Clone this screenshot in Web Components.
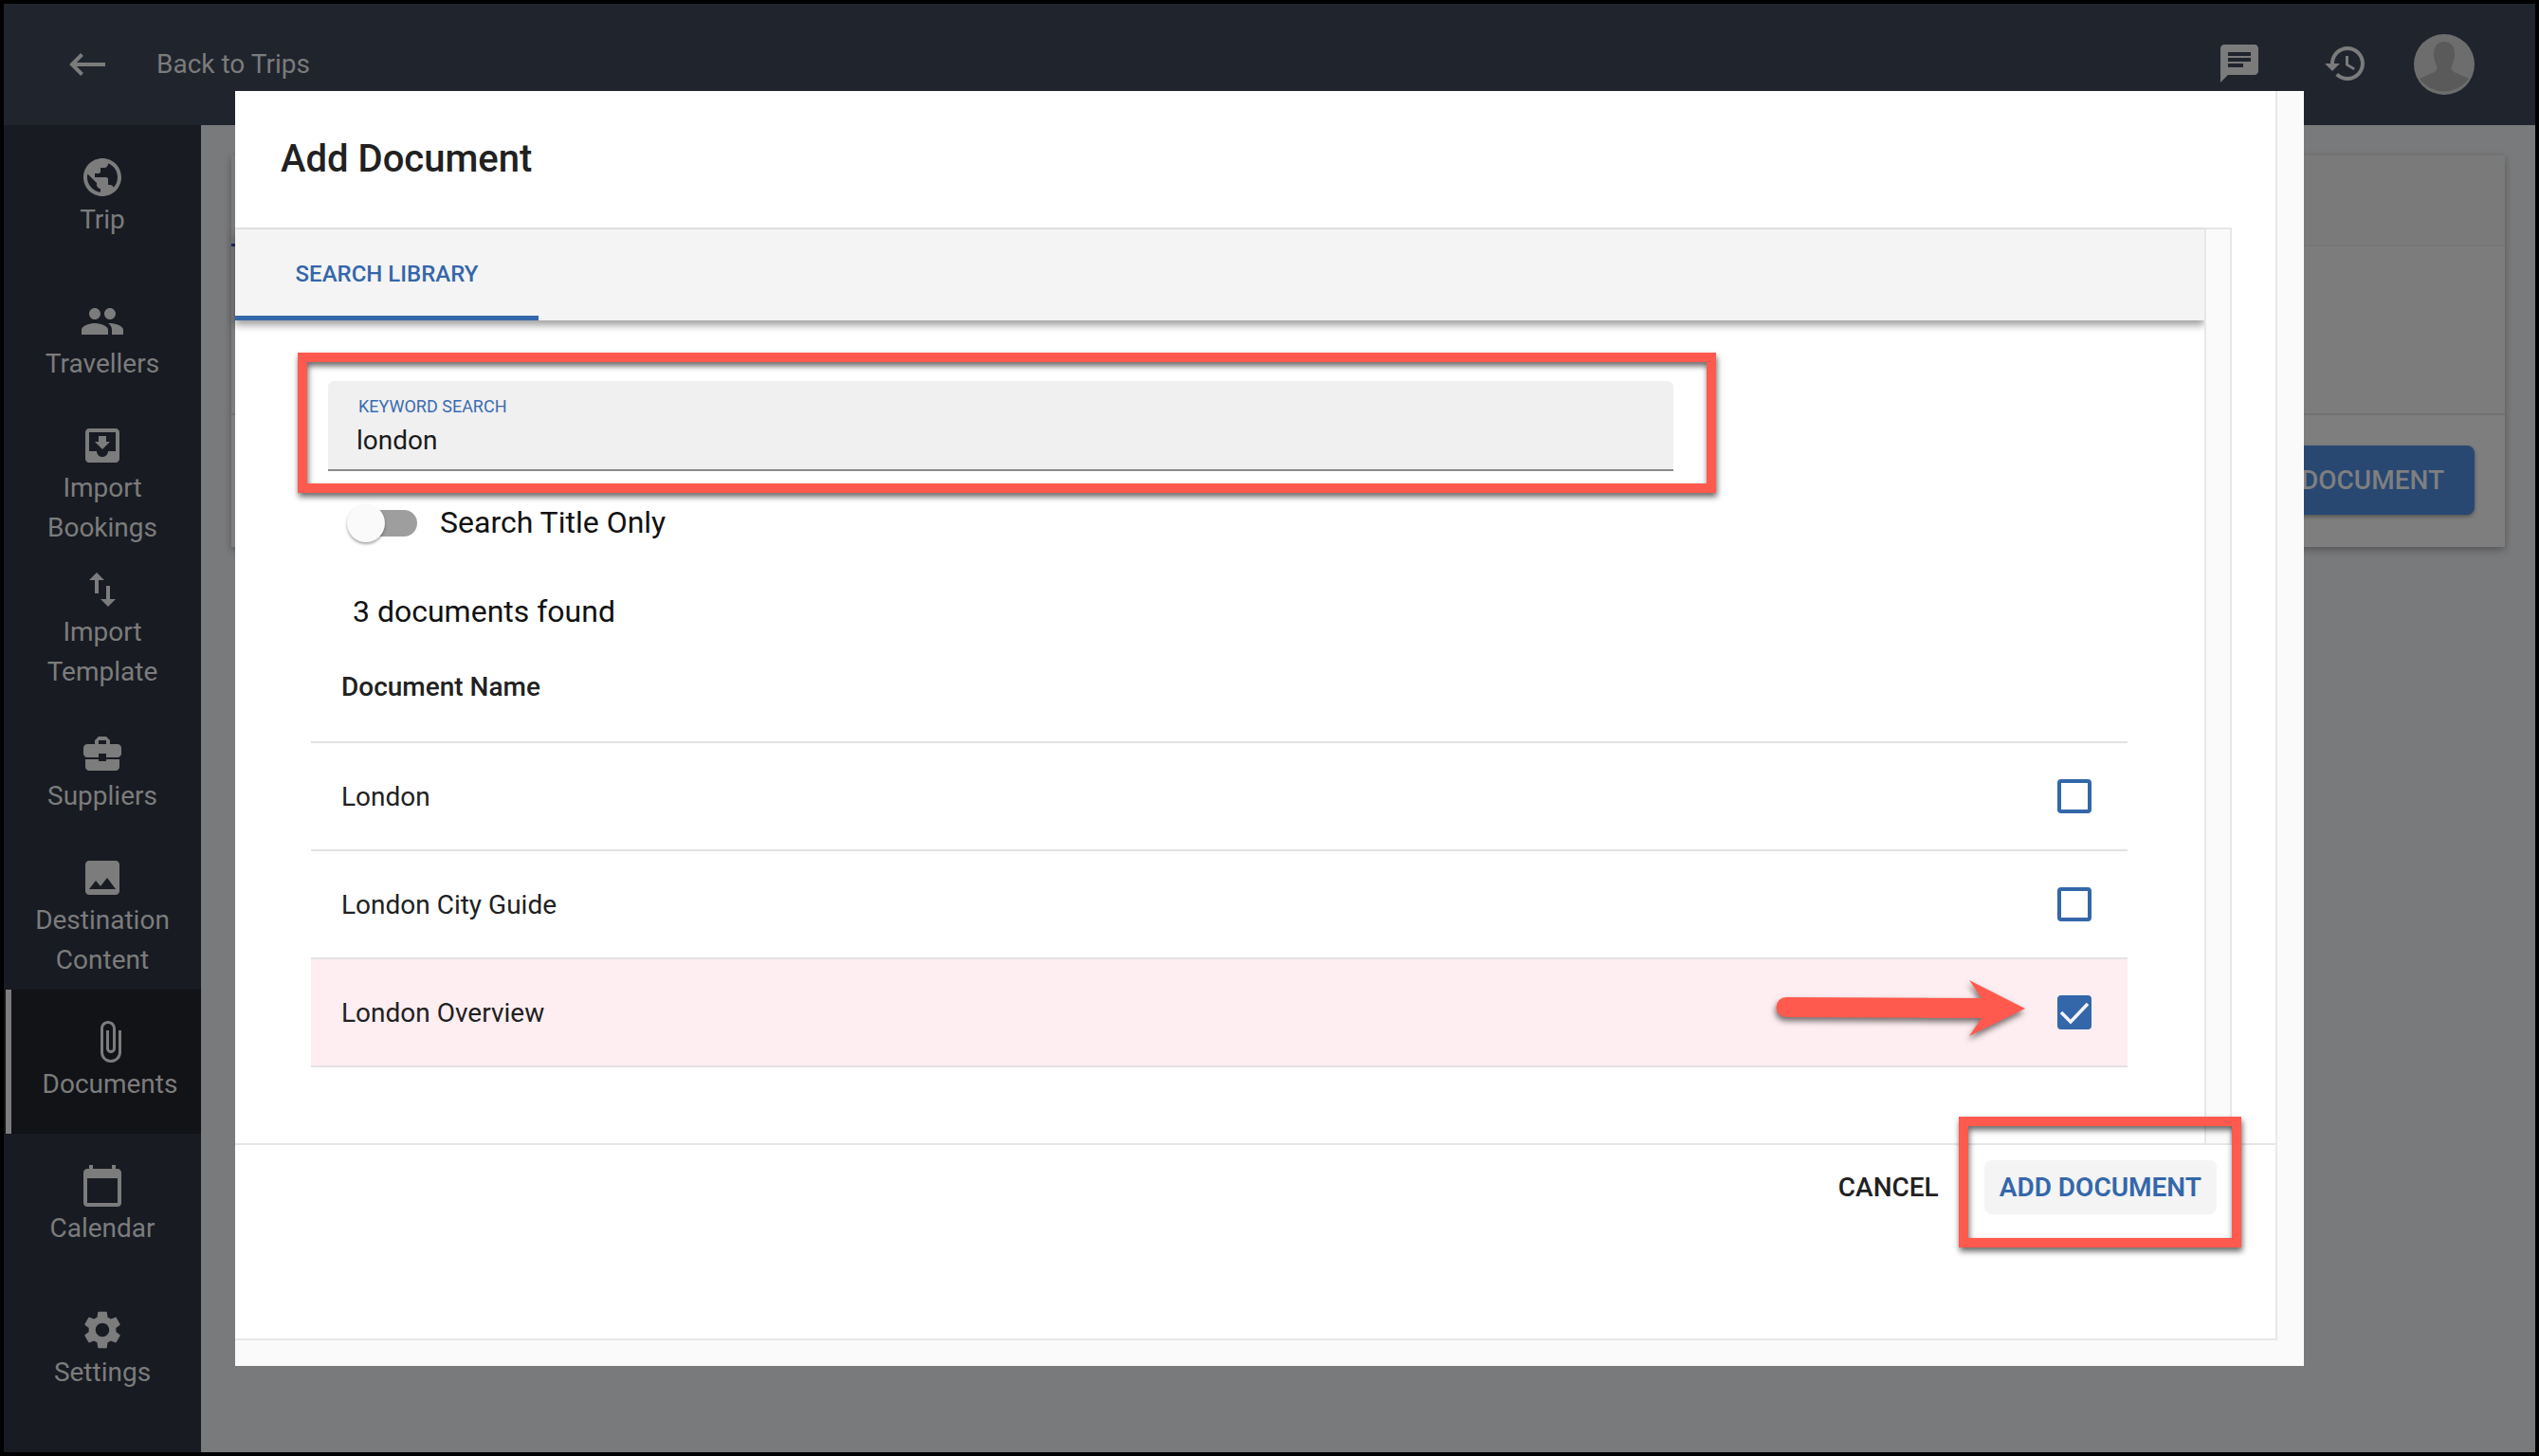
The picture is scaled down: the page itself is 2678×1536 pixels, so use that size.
<!DOCTYPE html>
<html lang="en">
<head>
<meta charset="utf-8">
<title>Add Document</title>
<style>
html, body { margin: 0; padding: 0; }
body {
  position: relative;
  box-sizing: border-box;
  width: 2678px;
  height: 1536px;
  padding: 4px;
  overflow: hidden;
  background: #000;
  font-family: Roboto, "Liberation Sans", sans-serif;
}
</style>
</head>
<body>

<trip-app>
  <trip-topbar slot="topbar"></trip-topbar>
  <side-nav slot="nav">
    <nav-item icon="public" label="Trip"></nav-item>
    <nav-item icon="people" label="Travellers"></nav-item>
    <nav-item icon="inbox" label="Import Bookings"></nav-item>
    <nav-item icon="swap" label="Import Template"></nav-item>
    <nav-item icon="briefcase" label="Suppliers"></nav-item>
    <nav-item icon="image" label="Destination Content"></nav-item>
    <nav-item icon="clip" label="Documents" active></nav-item>
    <nav-item icon="calendar" label="Calendar"></nav-item>
    <nav-item icon="settings" label="Settings"></nav-item>
  </side-nav>
  <backdrop-card></backdrop-card>
</trip-app>

<add-document-dialog>
  <search-field label="Keyword Search" value="london"></search-field>
  <title-toggle>Search Title Only</title-toggle>
  <doc-table count="3 documents found">
    <doc-row>London</doc-row>
    <doc-row>London City Guide</doc-row>
    <doc-row checked>London Overview</doc-row>
  </doc-table>
</add-document-dialog>

<callout-frame x="314" y="372" w="1496" h="148"></callout-frame>
<callout-frame x="2066" y="1178" w="298" h="138"></callout-frame>
<callout-arrow></callout-arrow>

<script>
const icons = {
  public: 'M12 2C6.48 2 2 6.48 2 12s4.48 10 10 10 10-4.48 10-10S17.52 2 12 2zm-1 17.93c-3.95-.49-7-3.85-7-7.93 0-.62.08-1.21.21-1.79L9 15v1c0 1.1.9 2 2 2v1.93zm6.9-2.54c-.26-.81-1-1.39-1.9-1.39h-1v-3c0-.55-.45-1-1-1H8v-2h2c.55 0 1-.45 1-1V7h2c1.1 0 2-.9 2-2v-.41c2.93 1.19 5 4.06 5 7.41 0 2.08-.8 3.97-2.1 5.39z',
  people: 'M16 11c1.66 0 2.99-1.34 2.99-3S17.66 5 16 5c-1.66 0-3 1.34-3 3s1.34 3 3 3zm-8 0c1.66 0 2.99-1.34 2.99-3S9.66 5 8 5C6.34 5 5 6.34 5 8s1.34 3 3 3zm0 2c-2.33 0-7 1.17-7 3.5V19h14v-2.5c0-2.33-4.67-3.5-7-3.5zm8 0c-.29 0-.62.02-.97.05 1.16.84 1.97 1.97 1.97 3.45V19h6v-2.5c0-2.33-4.67-3.5-7-3.5z',
  inbox: 'M19 3H4.99c-1.11 0-1.98.9-1.98 2L3 19c0 1.1.88 2 1.99 2H19c1.1 0 2-.9 2-2V5c0-1.1-.9-2-2-2zm0 12h-4c0 1.66-1.35 3-3 3s-3-1.34-3-3H4.99V5H19v10zm-3-5h-2V7h-4v3H8l4 4 4-4z',
  swap: 'M16 17.01V10h-2v7.01h-3L15 21l4-3.99h-3zM9 3L5 6.99h3V14h2V6.99h3L9 3z',
  briefcase: 'M10 16v-1H3.01L3 19c0 1.11.89 2 2 2h14c1.11 0 2-.89 2-2v-4h-7v1h-4zm10-9h-4.01V5l-2-2h-4l-2 2v2H4c-1.1 0-2 .9-2 2v3c0 1.11.89 2 2 2h6v-2h4v2h6c1.1 0 2-.9 2-2V9c0-1.1-.9-2-2-2zm-6 0h-4V5h4v2z',
  image: 'M21 19V5c0-1.1-.9-2-2-2H5c-1.1 0-2 .9-2 2v14c0 1.1.9 2 2 2h14c1.1 0 2-.9 2-2zM8.5 13.5l2.5 3.01L14.5 12l4.5 6H5l3.5-4.5z',
  clip: 'M16.5 6v11.5c0 2.21-1.79 4-4 4s-4-1.79-4-4V5c0-1.38 1.12-2.5 2.5-2.5s2.5 1.12 2.5 2.5v10.5c0 .55-.45 1-1 1s-1-.45-1-1V6H10v9.5c0 1.38 1.12 2.5 2.5 2.5s2.5-1.12 2.5-2.5V5c0-2.21-1.79-4-4-4S7 2.79 7 5v12.5c0 3.04 2.46 5.5 5.5 5.5s5.5-2.46 5.5-5.5V6h-1.5z',
  calendar: 'M20 3h-1V1h-2v2H7V1H5v2H4c-1.1 0-2 .9-2 2v16c0 1.1.9 2 2 2h16c1.1 0 2-.9 2-2V5c0-1.1-.9-2-2-2zm0 18H4V8h16v13z',
  settings: 'M19.14 12.94c.04-.3.06-.61.06-.94 0-.32-.02-.64-.07-.94l2.03-1.58c.18-.14.23-.41.12-.61l-1.92-3.32c-.12-.22-.37-.29-.59-.22l-2.39.96c-.5-.38-1.03-.7-1.62-.94l-.36-2.54c-.04-.24-.24-.41-.48-.41h-3.84c-.24 0-.43.17-.47.41l-.36 2.54c-.59.24-1.13.57-1.62.94l-2.39-.96c-.22-.08-.47 0-.59.22L2.74 8.87c-.12.21-.08.47.12.61l2.03 1.58c-.05.3-.09.63-.09.94s.02.64.07.94l-2.03 1.58c-.18.14-.23.41-.12.61l1.92 3.32c.12.22.37.29.59.22l2.39-.96c.5.38 1.03.7 1.62.94l.36 2.54c.05.24.24.41.48.41h3.84c.24 0 .44-.17.47-.41l.36-2.54c.59-.24 1.13-.56 1.62-.94l2.39.96c.22.08.47 0 .59-.22l1.92-3.32c.12-.22.07-.47-.12-.61l-2.01-1.58zM12 15.6c-1.98 0-3.6-1.62-3.6-3.6s1.62-3.6 3.6-3.6 3.6 1.62 3.6 3.6-1.62 3.6-3.6 3.6z',
  chat: 'M20 2H4c-1.1 0-1.99.9-1.99 2L2 22l4-4h14c1.1 0 2-.9 2-2V4c0-1.1-.9-2-2-2zM6 9h12v2H6V9zm8 5H6v-2h8v2zm4-6H6V6h12v2z',
  history: 'M13 3c-4.97 0-9 4.03-9 9H1l3.89 3.89.07.14L9 12H6c0-3.87 3.13-7 7-7s7 3.13 7 7-3.13 7-7 7c-1.93 0-3.68-.79-4.94-2.06l-1.42 1.42C8.27 19.99 10.51 21 13 21c4.97 0 9-4.03 9-9s-4.03-9-9-9zm-1 5v5l4.28 2.54.72-1.21-3.5-2.08V8H12z'
};

const svgIcon = (name) => '<svg width="48" height="48" viewBox="0 0 24 24" fill="currentColor"><path d="' + icons[name] + '"/></svg>';

class TripApp extends HTMLElement {
  constructor() {
    super();
    this.attachShadow({ mode: 'open' });
    this.shadowRoot.innerHTML = `
<style>
:host {
  display: grid;
  grid-template-columns: 208px 1fr;
  grid-template-rows: 128px 1fr;
  width: 2670px;
  height: 1528px;
  background: #797a7c;
}
.top { grid-column: 1 / 3; }
.main { min-width: 0; overflow: hidden; }
</style>
<div class="top"><slot name="topbar"></slot></div>
<div><slot name="nav"></slot></div>
<div class="main"><slot></slot></div>`;
  }
}
customElements.define('trip-app', TripApp);

class TripTopbar extends HTMLElement {
  constructor() {
    super();
    this.attachShadow({ mode: 'open' });
    this.shadowRoot.innerHTML = `
<style>
:host {
  display: flex;
  align-items: center;
  height: 128px;
  box-sizing: border-box;
  padding: 0 64px 0 67px;
  background: #20242d;
  color: #7b7b7b;
}
.back { display: block; }
.title { margin: 0 auto 0 54px; font-size: 28px; line-height: 40px; }
.actions { display: flex; align-items: center; }
.actions svg { display: block; margin-top: -2px; }
.history { margin-left: 64px; }
.actions svg.avatar { margin: 0 0 0 48px; }
</style>
<svg class="back" width="40" height="26" viewBox="0 0 40 26" fill="none" stroke="currentColor" stroke-width="4">
  <path d="M40 13H6"/><path d="M15.5 2.5L5 13l10.5 10.500"/>
</svg>
<span class="title">Back to Trips</span>
<div class="actions">
  ${svgIcon('chat')}
  <span class="history">${svgIcon('history')}</span>
  <svg class="avatar" width="64" height="64" viewBox="0 0 64 64">
    <circle cx="32" cy="32" r="32" fill="#6d6d6d"/>
    <path fill="#5a5a5a" d="M32 8c-7 0-11 5-11 13 0 6 2 10 3.500 14 .6 2-1 4-3 5L6 47a32 32 0 0 0 52 0l-15.500-7c-2-1-3.600-3-3-5 1.500-4 3.500-8 3.500-14 0-8-4-13-11-13z"/>
  </svg>
</div>`;
  }
}
customElements.define('trip-topbar', TripTopbar);

class SideNav extends HTMLElement {
  constructor() {
    super();
    this.attachShadow({ mode: 'open' });
    this.shadowRoot.innerHTML = `
<style>
:host {
  display: block;
  height: 1400px;
  background: #181b22;
}
</style>
<slot></slot>`;
  }
}
customElements.define('side-nav', SideNav);

class NavItem extends HTMLElement {
  constructor() {
    super();
    this.attachShadow({ mode: 'open' });
    this.shadowRoot.innerHTML = `
<style>
:host {
  display: flex;
  flex-direction: column;
  align-items: center;
  justify-content: center;
  box-sizing: border-box;
  height: 152px;
  color: #7c7c7c;
  font-size: 28px;
  line-height: 42px;
  text-align: center;
}
:host([active]) {
  padding-left: 16px;
  background: linear-gradient(to right, #121317 2px, #7d7d7d 2px, #7d7d7d 8px, #121317 8px);
}
svg { display: block; }
.label { width: 170px; }
</style>
<div id="icon"></div>
<div class="label" id="label"></div>`;
    this.shadowRoot.querySelector('#icon').innerHTML = svgIcon(this.getAttribute('icon'));
    this.shadowRoot.querySelector('#label').textContent = this.getAttribute('label');
  }
}
customElements.define('nav-item', NavItem);

class BackdropCard extends HTMLElement {
  constructor() {
    super();
    this.attachShadow({ mode: 'open' });
    this.shadowRoot.innerHTML = `
<style>
:host {
  display: block;
  width: 2398px;
  height: 413px;
  margin: 32px 0 0 32px;
  background: #7a7a7a;
  box-shadow: 0 3px 8px rgba(0,0,0,.3);
}
.head { height: 95px; border-bottom: 1px solid #737373; }
.tabline { width: 200px; height: 3px; margin-top: 93px; background: #1f2a66; float: left; }
.mid { height: 176px; border-bottom: 2px solid #717171; background: #7c7c7c; }
.foot {
  display: flex;
  justify-content: flex-end;
  padding: 32px 32px 0 0;
  height: 107px;
  background: #7e7e7e;
}
.btn {
  height: 73px;
  box-sizing: border-box;
  padding: 0 32px;
  border-radius: 8px;
  background: #284872;
  color: #7f7f7f;
  font-size: 28px;
  font-weight: 500;
  line-height: 73px;
  box-shadow: 0 2px 4px rgba(0,0,0,.35);
}
</style>
<div class="head"><div class="tabline"></div></div>
<div class="mid"></div>
<div class="foot"><div class="btn">ADD DOCUMENT</div></div>`;
  }
}
customElements.define('backdrop-card', BackdropCard);

class AddDocumentDialog extends HTMLElement {
  constructor() {
    super();
    this.attachShadow({ mode: 'open' });
    this.shadowRoot.innerHTML = `
<style>
:host {
  position: absolute;
  left: 248px;
  top: 96px;
  width: 2182px;
  height: 1345px;
  background: #fafafa;
  color: #212121;
}
.sheet {
  display: flex;
  flex-direction: column;
  box-sizing: border-box;
  width: 2154px;
  height: 1318px;
  background: #fff;
  border-right: 2px solid #e8e8e8;
  border-bottom: 2px solid #e8e8e8;
}
.title {
  box-sizing: border-box;
  width: 2106px;
  height: 146px;
  padding: 49px 0 0 48px;
  border-bottom: 2px solid #e6e6e6;
  font-size: 40px;
  font-weight: 500;
  line-height: 46px;
}
.body { display: flex; width: 2106px; height: 964px; }
.content { width: 2077px; }
.strip {
  box-sizing: border-box;
  width: 29px;
  background: #fafafa;
  border-left: 2px solid #e8e8e8;
  border-right: 2px solid #e8e8e8;
}
.tabs {
  height: 96px;
  background: #f4f4f4;
  box-shadow: 0 5px 8px rgba(0,0,0,.38);
}
.tab {
  box-sizing: border-box;
  width: 320px;
  height: 96px;
  border-bottom: 5px solid #3467aa;
  color: #3467aa;
  font-size: 24px;
  font-weight: 500;
  line-height: 94px;
  text-align: center;
}
.footer {
  display: flex;
  justify-content: flex-end;
  align-items: flex-start;
  flex: 1;
  padding: 16px 62px 0 0;
  border-top: 2px solid #e6e6e6;
  font-size: 28px;
  font-weight: 500;
  line-height: 57px;
}
.cancel { padding: 0 16px; margin-right: 32px; }
.add {
  padding: 0 16px;
  border-radius: 8px;
  background: #f4f4f4;
  color: #3467aa;
  font-weight: 600;
}
</style>
<div class="sheet">
  <div class="title">Add Document</div>
  <div class="body">
    <div class="content">
      <div class="tabs"><div class="tab">SEARCH LIBRARY</div></div>
      <slot></slot>
    </div>
    <div class="strip"></div>
  </div>
  <div class="footer">
    <span class="cancel">CANCEL</span>
    <span class="add">ADD DOCUMENT</span>
  </div>
</div>`;
  }
}
customElements.define('add-document-dialog', AddDocumentDialog);

class SearchField extends HTMLElement {
  constructor() {
    super();
    this.attachShadow({ mode: 'open' });
    this.shadowRoot.innerHTML = `
<style>
:host {
  display: block;
  box-sizing: border-box;
  width: 1419px;
  height: 95px;
  margin: 64px 0 0 98px;
  padding: 16px 30px 0 30px;
  background: #f0f0f0;
  border-bottom: 2px solid #8a8a8a;
  border-radius: 6px 6px 0 0;
}
#label {
  margin-left: 2px;
  color: #3a6cb0;
  font-size: 18px;
  line-height: 22px;
  text-transform: uppercase;
}
#value {
  margin-top: 7px;
  color: #1a1a1a;
  font-size: 28px;
  line-height: 36px;
}
</style>
<div id="label"></div>
<div id="value"></div>`;
    this.shadowRoot.querySelector('#label').textContent = this.getAttribute('label');
    this.shadowRoot.querySelector('#value').textContent = this.getAttribute('value');
  }
}
customElements.define('search-field', SearchField);

class TitleToggle extends HTMLElement {
  constructor() {
    super();
    this.attachShadow({ mode: 'open' });
    this.shadowRoot.innerHTML = `
<style>
:host {
  display: flex;
  align-items: center;
  height: 40px;
  margin: 35px 0 0 118px;
  color: #111;
  font-size: 32px;
}
.track {
  position: relative;
  width: 60px;
  height: 28px;
  margin-left: 14px;
  border-radius: 14px;
  background: #9e9e9e;
}
.thumb {
  position: absolute;
  left: -14px;
  top: -6px;
  width: 40px;
  height: 40px;
  border-radius: 50%;
  background: #fafafa;
  box-shadow: 0 2px 3px rgba(0,0,0,.35);
}
.text { margin: -2px 0 0 24px; }
</style>
<div class="track"><div class="thumb"></div></div>
<span class="text"><slot></slot></span>`;
  }
}
customElements.define('title-toggle', TitleToggle);

class DocTable extends HTMLElement {
  constructor() {
    super();
    this.attachShadow({ mode: 'open' });
    this.shadowRoot.innerHTML = `
<style>
:host { display: block; }
#count {
  height: 41px;
  margin: 53px 0 0 124px;
  color: #111;
  font-size: 32px;
  line-height: 40px;
}
.table { width: 1916px; margin-left: 80px; }
.head {
  box-sizing: border-box;
  height: 118px;
  padding-left: 32px;
  border-bottom: 2px solid #e2e2e2;
  color: #212121;
  font-size: 28px;
  font-weight: 500;
  line-height: 118px;
}
</style>
<div id="count"></div>
<div class="table">
  <div class="head">Document Name</div>
  <slot></slot>
</div>`;
    this.shadowRoot.querySelector('#count').textContent = this.getAttribute('count');
  }
}
customElements.define('doc-table', DocTable);

class DocRow extends HTMLElement {
  constructor() {
    super();
    this.attachShadow({ mode: 'open' });
    this.shadowRoot.innerHTML = `
<style>
:host {
  display: flex;
  align-items: center;
  justify-content: space-between;
  box-sizing: border-box;
  height: 114px;
  padding: 0 38px 0 32px;
  border-bottom: 2px solid #e2e2e2;
  color: #212121;
  font-size: 28px;
}
:host([checked]) { background: #feeef1; }
.box {
  box-sizing: border-box;
  width: 36px;
  height: 36px;
  border: 4px solid #3467aa;
  border-radius: 4px;
}
:host([checked]) .box { background: #3467aa; }
svg { display: block; margin: -4px; }
</style>
<slot></slot>
<div class="box">${this.hasAttribute('checked') ? '<svg width="36" height="36" viewBox="0 0 36 36" fill="none" stroke="#f4f4f8" stroke-width="3.5"><path d="M4 18l10 10L32 9"/></svg>' : ''}</div>`;
  }
}
customElements.define('doc-row', DocRow);

class CalloutFrame extends HTMLElement {
  constructor() {
    super();
    this.attachShadow({ mode: 'open' });
    this.shadowRoot.innerHTML = `
<style>
:host {
  position: absolute;
  box-sizing: border-box;
  filter: drop-shadow(1px 4px 3px rgba(0,0,0,.6));
}
.frame {
  box-sizing: border-box;
  width: 100%;
  height: 100%;
  border: 10px solid #ff5a4d;
}
</style>
<div class="frame"></div>`;
    this.style.left = this.getAttribute('x') + 'px';
    this.style.top = this.getAttribute('y') + 'px';
    this.style.width = this.getAttribute('w') + 'px';
    this.style.height = this.getAttribute('h') + 'px';
  }
}
customElements.define('callout-frame', CalloutFrame);

class CalloutArrow extends HTMLElement {
  constructor() {
    super();
    this.attachShadow({ mode: 'open' });
    this.shadowRoot.innerHTML = `
<style>
:host {
  position: absolute;
  left: 1873px;
  top: 1034px;
  width: 264px;
  height: 60px;
  filter: drop-shadow(-1px 4px 3px rgba(0,0,0,.55));
}
svg { display: block; }
</style>
<svg width="264" height="60" viewBox="0 0 264 60">
  <path fill="#ff5a4d" d="M11 18L217 19 204 0 263 30 204 59 217 40 11 39A10.500 10.500 0 0 1 11 18z"/>
</svg>`;
  }
}
customElements.define('callout-arrow', CalloutArrow);
</script>
</body>
</html>
